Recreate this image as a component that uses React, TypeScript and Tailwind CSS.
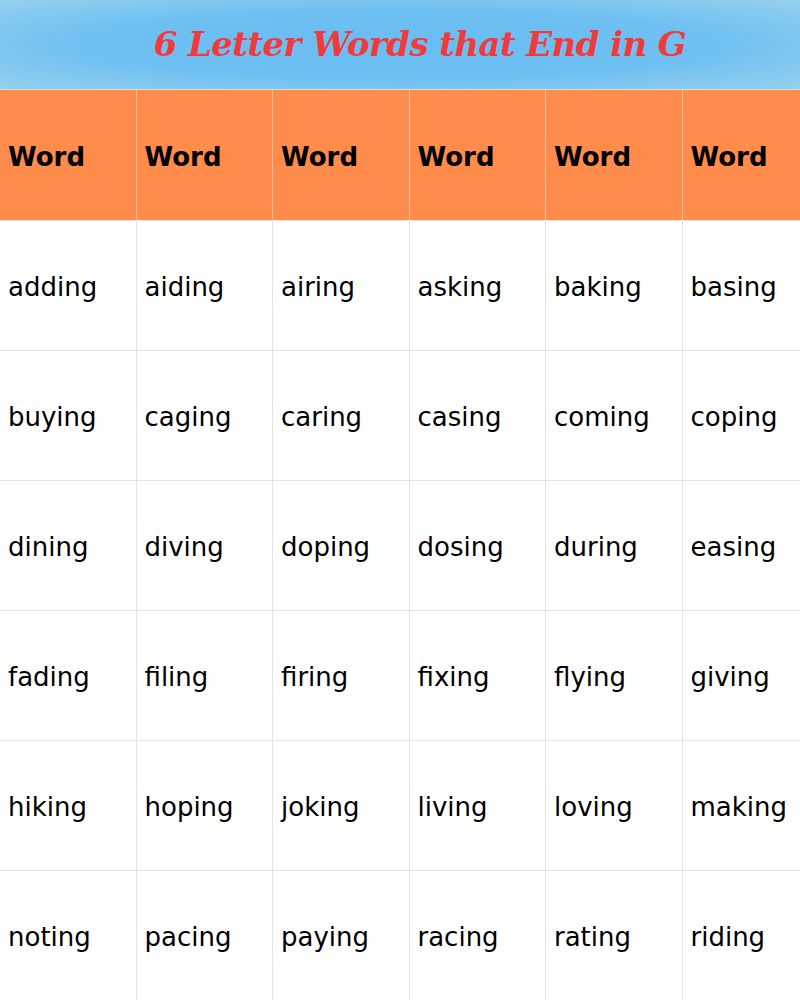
import React from 'react';

const rows: string[][] = [
  ['adding', 'aiding', 'airing', 'asking', 'baking', 'basing'],
  ['buying', 'caging', 'caring', 'casing', 'coming', 'coping'],
  ['dining', 'diving', 'doping', 'dosing', 'during', 'easing'],
  ['fading', 'filing', 'firing', 'fixing', 'flying', 'giving'],
  ['hiking', 'hoping', 'joking', 'living', 'loving', 'making'],
  ['noting', 'pacing', 'paying', 'racing', 'rating', 'riding'],
];

const App: React.FC = () => {
  return (
    <div className="w-[800px] h-[1000px] overflow-hidden bg-white">
      {/* Title band */}
      <div className="h-[89px] flex items-center justify-center pl-10 bg-[radial-gradient(ellipse_at_center,#67bdf3_0%,#6fc0f2_55%,#95d0ee_100%)]">
        <h1 className="font-['DejaVu_Serif',serif] font-bold italic text-[34px] tracking-[-0.6px] text-[#f23a3a]">
          6 Letter Words that End in G
        </h1>
      </div>

      {/* Table */}
      <div className="w-[819px] grid grid-cols-[repeat(6,136.5px)] font-['Comic_Sans_MS','DejaVu_Sans',sans-serif] text-black border-t border-[#dcdcdc]">
        {Array.from({ length: 6 }).map((_, i) => (
          <div
            key={`h${i}`}
            className="h-[130px] flex items-center pl-2 pt-1 bg-[#ff8c4a] border-r border-[#f1c0a2] text-[26px] font-bold"
          >
            Word
          </div>
        ))}
        {rows.map((row, r) =>
          row.map((w, c) => (
            <div
              key={`${r}-${c}`}
              className="h-[130px] flex items-center pl-2 pt-1 border-r border-t border-[#e3e3e3] text-[26px]"
            >
              {w}
            </div>
          ))
        )}
      </div>
    </div>
  );
};

export default App;
